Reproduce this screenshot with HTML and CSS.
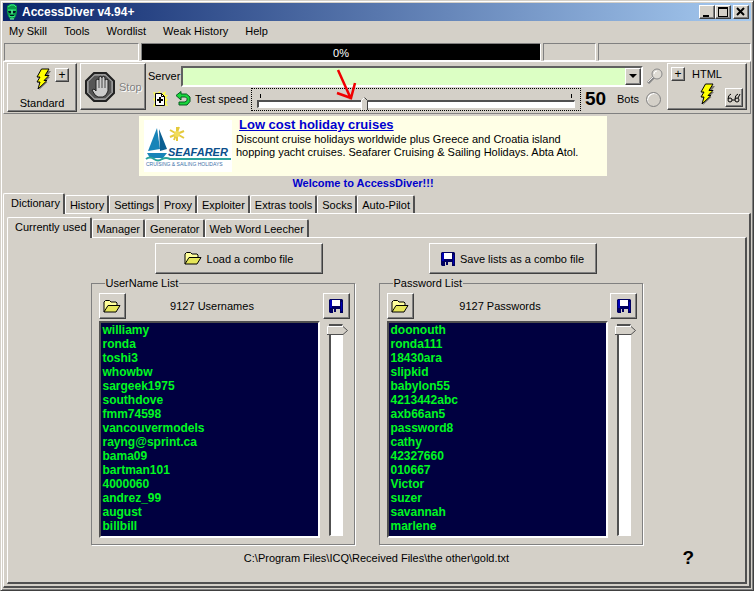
FILE: index.html
```html
<!DOCTYPE html>
<html lang="en">
<head>
<meta charset="utf-8">
<title>AccessDiver v4.94+</title>
<link rel="stylesheet" href="styles.css">
</head>
<body>
<svg class="defs" aria-hidden="true">
  <symbol id="bolt" viewBox="0 0 16 22"><path d="M9 3 16 3 11.500 9 15 9 10 14 12.500 14 4 22 6 15 3 15 6 10 3 10Z" fill="#77756e"/><path d="M6.500 1H14L10 7.500h4L9 12.500h3L3 21l2-7H2l3-5H2Z" fill="#ff0" stroke="#000"/></symbol>
  <symbol id="folder" viewBox="0 0 18 13"><path d="M1 12V2l1.500-1.500h4L8 2h5l1 1v2" fill="#ffff9c" stroke="#000"/><path d="M1 12 5 5.500h12L13 12Z" fill="#e6e65a" stroke="#000"/></symbol>
  <symbol id="disk" viewBox="0 0 14 14"><path d="M0 1 1 0h12l1 1v13H1l-1-1Z" fill="#000060"/><path d="M1 1h2v8H1zM12 3h1v9h-1z" fill="#0000b8"/><path d="M3 1h8v6H3z" fill="#fff"/><path d="M4 10h7v4H4z" fill="#d4d0c8"/><path d="M5 10h2v3H5z" fill="#000060"/></symbol>
</svg>
<div class="window">
  <header class="titlebar">
    <svg class="app-icon" viewBox="0 0 14 16"><path d="M2 2 5 0h4l3 2v6l-1 4-2 3H5l-2-3-1-4Z" fill="#0b9a48"/><path d="M3 3 6 1h3l2 2M3 6h8M4 12l3 1 3-1" fill="none" stroke="#35ef86"/><path d="M3 7h3v2H4zM8 7h3l-1 2H8zM5 11h4v1H5z" fill="#012"/><path d="M7 6v4M5 15h4" stroke="#7fffb0"/></svg>
    <h1>AccessDiver v4.94+</h1>
    <button class="caption" aria-label="Minimize"><svg viewBox="0 0 10 10"><path d="M1 8h6v2H1z"/></svg></button>
    <button class="caption" aria-label="Maximize"><svg viewBox="0 0 10 10"><path d="M0 0h10v10H0zM1 2v7h8V2z" fill-rule="evenodd"/></svg></button>
    <button class="caption close" aria-label="Close"><svg viewBox="0 0 10 10"><path d="m1 1 7 7m0-7-7 7" stroke="#000" stroke-width="2"/></svg></button>
  </header>

  <nav class="menu">
    <button>My Skill</button><button>Tools</button><button>Wordlist</button><button>Weak History</button><button>Help</button>
  </nav>

  <div class="status">
    <div class="cell cell-left"></div>
    <div class="progress">0%</div>
    <div class="cell cell-small"></div>
    <div class="cell cell-right"></div>
  </div>

  <section class="toolbar">
    <div class="group standard">
      <div class="group-row"><svg class="bolt"><use href="#bolt"/></svg><button class="tiny raised" aria-label="Standard options">+</button></div>
      <span>Standard</span>
    </div>
    <button class="raised stop" disabled>
      <svg viewBox="0 0 30 30"><path d="M9 1h12l8 8v12l-8 8H9l-8-8V9Z" fill="#777" stroke="#222" stroke-width="2"/><path d="M9.500 3h11L27 9.500v11L20.500 27h-11L3 20.500v-11Z" fill="#555" stroke="#bbb"/><path d="m7 18 2-1 2 2V8l2-1 1 1V5l2-1 1 2V5l2-1 1 2v2l2-1 1 1v11l-2 4-3 2h-5l-3-2Z" fill="#ccc" stroke="#222"/><path d="M14 8v8m3-10v10m3-8v8" stroke="#444"/></svg>
      Stop
    </button>
    <div class="main-tools">
      <div class="server-row">
        <label for="server">Server</label>
        <div class="combo">
          <select id="server"><option></option></select>
          <span class="combo-arrow raised"></span>
        </div>
        <svg class="lens" viewBox="0 0 16 16"><path d="m1 15 6-6" stroke="#888" stroke-width="3"/><path d="m1 14 6-6" stroke="#eee"/><circle cx="10" cy="6" r="5" fill="#dedbd4" stroke="#888"/><path d="M7 6a3 3 0 0 1 3-3" fill="none" stroke="#fff"/></svg>
      </div>
      <div class="speed-row">
        <svg class="new-doc" viewBox="0 0 16 16"><path d="M8 0 9 3 14 0l-1 4 3 0-2 3 2 2-2 2 2 4-4-1-3 2-3-2-5 2 2-5-2-3 2-2-2-5 4 1Z" fill="#ffff50"/><path d="M3.500 2.500h6l3 3v9h-9Z" fill="#fff" stroke="#000"/><path d="M9.500 2.500v3h3" fill="none" stroke="#000"/><path d="M8 6v6M5 9h6" stroke="#000" stroke-width="2"/></svg>
        <svg class="undo" viewBox="0 0 16 16"><path d="m1 4.500 5-4V3h5.500L15 6v4.500L12 14H4v-3h6l2-1.500v-2L10.500 6H6v3Z" fill="#18d83c" stroke="#065a20"/></svg>
        <label for="speed">Test speed</label>
        <div class="speed">
          <input id="speed" type="range" min="0" max="100" value="33">
          <svg class="arrow" viewBox="0 0 22 34"><path d="m3 2 13 29M2 25l14 5 4-15" fill="none" stroke="#f00000" stroke-width="2.500"/></svg>
        </div>
        <strong class="bots-count">50</strong>
        <label class="bots-label" for="bots">Bots</label>
        <input id="bots" class="bots" type="radio">
      </div>
    </div>
    <div class="group html">
      <div class="group-row"><button class="tiny raised" aria-label="HTML options">+</button><span>HTML</span></div>
      <div class="group-row html-icons"><svg class="bolt"><use href="#bolt"/></svg>
      <button class="view raised" aria-label="View"><svg viewBox="0 0 14 10"><path d="M4 1Q1 2 1 6m7 0q0-4 3-5M13 1l-2 4" fill="none" stroke="#000"/><circle cx="3" cy="7" r="2" fill="none" stroke="#000"/><circle cx="10" cy="7" r="2" fill="none" stroke="#000"/><path d="M5 7h3" stroke="#000"/></svg></button></div>
    </div>
  </section>

  <aside class="banner">
    <svg class="logo" viewBox="0 0 88 52">
      <path d="M0 0h88v52H0z" fill="#fff"/>
      <path d="M13 8 16 29 4 31Z" fill="#1784b8"/><path d="m15 9 8 20-7 2Z" fill="#0b5f92"/><path d="M3 33h20l-4 5H6Z" fill="#1784b8"/>
      <path d="M33 7v14m-7-4 14-6M26 10l14 8m-5-11-5 13" stroke="#e4c93c" stroke-width="2"/><circle cx="33" cy="14" r="3" fill="#f1dc5a"/>
      <path d="M2 39q4-3 8 0t8 0q4-2 8 0h61" fill="none" stroke="#2aa39b" stroke-width="2"/>
      <text x="24" y="36" class="logo-name">SEAFARER</text>
      <text x="2" y="46" class="logo-tag">CRUISING &amp; SAILING HOLIDAYS</text>
    </svg>
    <div>
      <a href="#cruises">Low cost holiday cruises</a>
      <p>Discount cruise holidays worldwide plus Greece and Croatia island<br>hopping yacht cruises. Seafarer Cruising &amp; Sailing Holidays. Abta Atol.</p>
    </div>
  </aside>
  <p class="welcome">Welcome to AccessDiver!!!</p>

  <nav class="tabs">
    <button class="tab active">Dictionary</button><button class="tab">History</button><button class="tab">Settings</button><button class="tab">Proxy</button><button class="tab">Exploiter</button><button class="tab">Extras tools</button><button class="tab">Socks</button><button class="tab">Auto-Pilot</button>
  </nav>
  <main class="page outer">
    <nav class="tabs">
      <button class="tab active">Currently used</button><button class="tab">Manager</button><button class="tab">Generator</button><button class="tab">Web Word Leecher</button>
    </nav>
    <div class="page inner">
      <div class="lists">
        <div class="column">
          <button class="combo-file raised"><svg class="folder"><use href="#folder"/></svg>Load a combo file</button>
          <fieldset>
            <legend>UserName List</legend>
            <div class="list-head">
              <button class="square raised" aria-label="Open usernames"><svg class="folder"><use href="#folder"/></svg></button>
              <label for="users">9127 Usernames</label>
              <button class="square raised" aria-label="Save usernames"><svg class="disk"><use href="#disk"/></svg></button>
            </div>
            <div class="list-body">
              <select id="users" class="list" size="15">
                <option>williamy</option><option>ronda</option><option>toshi3</option><option>whowbw</option><option>sargeek1975</option><option>southdove</option><option>fmm74598</option><option>vancouvermodels</option><option>rayng@sprint.ca</option><option>bama09</option><option>bartman101</option><option>4000060</option><option>andrez_99</option><option>august</option><option>billbill</option>
              </select>
              <input class="position" type="range" value="0" aria-label="Username position">
            </div>
          </fieldset>
        </div>
        <div class="column">
          <button class="combo-file raised"><svg class="disk"><use href="#disk"/></svg>Save lists as a combo file</button>
          <fieldset>
            <legend>Password List</legend>
            <div class="list-head">
              <button class="square raised" aria-label="Open passwords"><svg class="folder"><use href="#folder"/></svg></button>
              <label for="words">9127 Passwords</label>
              <button class="square raised" aria-label="Save passwords"><svg class="disk"><use href="#disk"/></svg></button>
            </div>
            <div class="list-body">
              <select id="words" class="list" size="15">
                <option>doonouth</option><option>ronda111</option><option>18430ara</option><option>slipkid</option><option>babylon55</option><option>4213442abc</option><option>axb66an5</option><option>password8</option><option>cathy</option><option>42327660</option><option>010667</option><option>Victor</option><option>suzer</option><option>savannah</option><option>marlene</option>
              </select>
              <input class="position" type="range" value="0" aria-label="Password position">
            </div>
          </fieldset>
        </div>
      </div>
      <footer class="footer">
        <span>C:\Program Files\ICQ\Received Files\the other\gold.txt</span>
        <button class="help" aria-label="Help">?</button>
      </footer>
    </div>
  </main>
</div>
</body>
</html>
```
FILE: styles.css
```css
* { box-sizing: border-box; }

body {
  margin: 0;
  background: #fff;
  color: #000;
  font: 11px/14px "Liberation Sans", Arial, sans-serif;
}

button, select, input { margin: 0; padding: 0; font: inherit; color: inherit; }
button { background: none; border: 0; }
svg { display: block; flex: none; }
.defs { position: absolute; width: 0; height: 0; }

.window {
  margin-right: 1px;
  padding: 2px;
  background: #d4d0c8;
  border: 1px solid #d4d0c8;
  border-right-color: #404040;
  border-bottom-color: #404040;
  box-shadow: inset 1px 1px #fff, inset -1px -1px #808080;
}

.raised {
  background: #d4d0c8;
  border: 1px solid #fff;
  border-right-color: #404040;
  border-bottom-color: #404040;
  box-shadow: inset -1px -1px #808080;
}

/* Title bar */
.titlebar {
  display: flex;
  align-items: center;
  height: 18px;
  padding: 0 2px;
  background: linear-gradient(90deg, #0a246a, #a6caf0);
}
.app-icon { width: 14px; height: 16px; margin-right: 3px; }
h1 { flex: 1; margin: 0; font-size: 12px; line-height: 18px; color: #fff; }
.caption {
  display: grid;
  place-items: center;
  width: 16px;
  height: 14px;
  background: #d4d0c8;
  border: 1px solid #fff;
  border-right-color: #404040;
  border-bottom-color: #404040;
  box-shadow: inset -1px -1px #808080;
}
.caption svg { width: 10px; height: 10px; }
.close { margin-left: 2px; }

/* Menu */
.menu { display: flex; gap: 17px; height: 22px; padding: 0 6px 2px; }

/* Status cells */
.status { display: flex; gap: 2px; height: 18px; padding-left: 1px; }
.cell { border: 1px solid #808080; border-right-color: #fff; border-bottom-color: #fff; }
.cell-left { width: 135px; }
.cell-small { width: 53px; }
.cell-right { width: 153px; }
.progress {
  flex: 1;
  background: #000;
  border: 1px solid #808080;
  border-right-color: #fff;
  border-bottom-color: #fff;
  color: #fff;
  line-height: 18px;
  text-align: center;
}

/* Toolbar */
.toolbar {
  display: flex;
  height: 53px;
  padding: 1px 3px 0;
  border: 1px solid #fff;
  border-right-color: #808080;
  border-bottom-color: #808080;
}
.group {
  display: flex;
  flex-direction: column;
  align-items: center;
  border: 1px solid #fff;
  border-right-color: #404040;
  border-bottom-color: #404040;
  box-shadow: inset -1px -1px #808080;
}
.group-row { display: flex; align-items: center; }
.standard { width: 70px; height: 49px; margin-right: 3px; padding-top: 4px; }
.standard .group-row { align-items: flex-start; gap: 4px; height: 28px; padding-left: 20px; }
.bolt { width: 16px; height: 22px; }
.tiny { width: 14px; height: 14px; font-size: 12px; line-height: 11px; }
.stop {
  display: flex;
  align-items: center;
  gap: 4px;
  width: 66px;
  height: 47px;
  padding: 0 4px;
  color: #808080;
  text-shadow: 1px 1px #fff;
}
.stop svg { width: 30px; height: 30px; }
.main-tools { flex: 1; min-width: 0; padding: 2px 4px 0 2px; }
.server-row, .speed-row { display: flex; align-items: center; }
.server-row { height: 22px; }
.combo { position: relative; flex: 1; height: 21px; margin: 0 4px 0 1px; }
.combo select {
  width: 100%;
  height: 100%;
  appearance: none;
  background: #dcffc4;
  border: 2px solid #fff;
  border-top-color: #606060;
  border-left-color: #606060;
  border-radius: 0;
}
.combo-arrow {
  position: absolute;
  top: 2px;
  right: 2px;
  width: 16px;
  height: 17px;
  pointer-events: none;
}
.combo-arrow::after {
  content: "";
  display: block;
  margin: 5px 3px;
  border: 4px solid transparent;
  border-top-color: #000;
  border-bottom: 0;
}
.lens { width: 16px; height: 16px; }
.speed-row { height: 24px; padding-right: 2px; }
.new-doc { width: 16px; height: 16px; margin: 0 7px 0 4px; }
.undo { width: 16px; height: 16px; margin-right: 4px; }
.speed {
  position: relative;
  flex: 1;
  height: 23px;
  margin: 0 4px 0 3px;
  padding: 5px 5px 0;
  border: 1px dotted #000;
}
.speed::before {
  content: "";
  display: block;
  height: 4px;
  margin: 0 3px;
  border: solid #000;
  border-width: 0 1px;
}
.speed input { display: block; width: 100%; height: 12px; appearance: none; background: none; }
.speed input::-webkit-slider-runnable-track {
  height: 8px;
  background: #fff;
  border: 1px solid #fff;
  border-top: 2px solid #505050;
  border-left: 2px solid #505050;
}
.speed input::-webkit-slider-thumb {
  appearance: none;
  width: 7px;
  height: 13px;
  margin-top: -5px;
  background: url("data:image/svg+xml,%3Csvg xmlns='http://www.w3.org/2000/svg' viewBox='0 0 7 13'%3E%3Cpath d='M0 13V3l3-3 4 3v10z' fill='%23d4d0c8'/%3E%3Cpath d='M.5 13V3.500l3-3' fill='none' stroke='%23fff'/%3E%3Cpath d='m3.500.500 3 3V13' fill='none' stroke='%23404040'/%3E%3C/svg%3E");
}
.arrow { position: absolute; left: 83px; top: -21px; width: 22px; height: 34px; pointer-events: none; }
.bots-count { width: 22px; margin-right: 10px; font-size: 19px; line-height: 20px; }
.bots-label { width: 25px; margin-right: 4px; }
.bots {
  width: 15px;
  height: 15px;
  appearance: none;
  border: 1px solid #808080;
  border-radius: 50%;
  box-shadow: inset 1px 1px #fff;
}
.html { align-items: stretch; width: 80px; height: 47px; padding: 2px 3px; }
.html .group-row { gap: 7px; }
.html .tiny { margin-top: 1px; }
.html .html-icons { justify-content: flex-end; gap: 10px; height: 28px; }
.view { display: grid; place-items: center; align-self: flex-end; width: 18px; height: 19px; }
.view svg { width: 14px; height: 10px; }

/* Banner */
.banner {
  display: flex;
  width: 468px;
  height: 60px;
  margin: 2px 0 0 136px;
  padding: 4px 4px 4px 5px;
  background: #ffffe6;
}
.logo { width: 88px; height: 52px; margin-right: 4px; }
.logo-name { font: italic bold 11px "Liberation Sans", sans-serif; fill: #0b4f8c; }
.logo-tag { font: 5px "Liberation Sans", sans-serif; fill: #3b6fa8; }
.banner a { display: block; margin-left: 3px; font-size: 13px; line-height: 10px; font-weight: bold; color: #0000d0; }
.banner p { margin: 3px 0 0; line-height: 13px; white-space: nowrap; }
.welcome { margin: 0 28px 3px 0; font-weight: bold; color: #00c; text-align: center; }

/* Tabs */
.tabs { display: flex; align-items: flex-end; height: 20px; }
.tab {
  height: 18px;
  padding: 0 3px 0 4px;
  border: 1px solid #fff;
  border-right: 2px solid #505050;
  border-bottom: 0;
  border-radius: 2px 2px 0 0;
  white-space: nowrap;
}
.tab.active {
  position: relative;
  height: 21px;
  margin-bottom: -1px;
  padding: 0 3px 2px 7px;
  background: #d4d0c8;
}
.page {
  border: 1px solid #fff;
  border-right: 2px solid #505050;
  border-bottom: 2px solid #505050;
}
.outer { padding: 3px 2px 2px 3px; }
.inner { padding: 5px 0 17px; }
.lists { display: flex; justify-content: center; gap: 24px; padding-right: 20px; }
.column { width: 264px; }
.combo-file {
  display: flex;
  align-items: center;
  justify-content: center;
  gap: 5px;
  width: 168px;
  height: 31px;
  margin: 0 auto 2px 64px;
}
.column + .column .combo-file { margin-left: 50px; }
.folder { width: 18px; height: 13px; }
.disk { width: 14px; height: 14px; }
fieldset {
  margin: 0;
  padding: 3px 4px 6px 7px;
  border: 1px solid #808080;
  box-shadow: 1px 1px #fff;
}
legend { margin-left: 6px; padding: 0 1px; }
.list-head { display: flex; justify-content: space-between; align-items: center; }
.list-head label { padding-right: 24px; }
.square { display: grid; place-items: center; width: 27px; height: 26px; }
.list-body { display: flex; gap: 5px; margin-top: 2px; }
.list {
  flex: 1;
  height: 217px;
  overflow: hidden;
  appearance: none;
  background: #000040;
  border: 2px solid #fff;
  border-top-color: #505050;
  border-left-color: #505050;
  border-radius: 0;
  color: #00f820;
  font-size: 12px;
}
.list option { min-height: 14px; padding: 0 2px; font-weight: bold; line-height: 14px; }
.position {
  width: 22px;
  height: 212px;
  margin: 3px 3px 0 0;
  appearance: none;
  writing-mode: vertical-lr;
  background: none;
}
.position::-webkit-slider-runnable-track {
  width: 14px;
  height: 100%;
  background: #fff;
  border: 1px solid #fff;
  border-top: 2px solid #505050;
  border-left: 2px solid #505050;
}
.position::-webkit-slider-thumb {
  appearance: none;
  width: 21px;
  height: 9px;
  margin-left: -4px;
  background: url("data:image/svg+xml,%3Csvg xmlns='http://www.w3.org/2000/svg' viewBox='0 0 21 9'%3E%3Cpath d='M0 0h16l5 4-5 5H0z' fill='%23d4d0c8'/%3E%3Cpath d='M.5 9V.500H16' fill='none' stroke='%23fff'/%3E%3Cpath d='m16 .500 4.500 4-4.500 4H0' fill='none' stroke='%23505050'/%3E%3C/svg%3E");
}
.footer { position: relative; padding-top: 6px; text-align: center; }
.help { position: absolute; right: 51px; top: 3px; font-size: 19px; line-height: 20px; font-weight: bold; }
```
